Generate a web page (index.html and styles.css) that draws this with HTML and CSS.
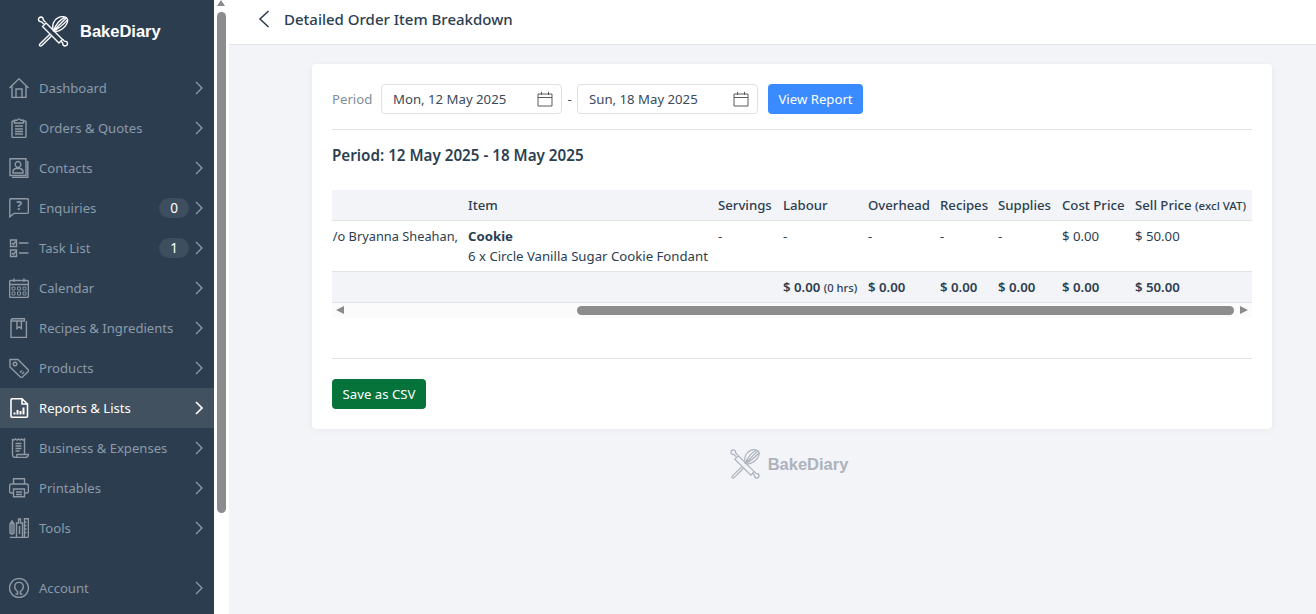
FILE: index.html
```html
<!DOCTYPE html>
<html lang="en">

<head>
    <meta charset="UTF-8">
    <meta name="viewport" content="width=device-width, initial-scale=1.0">
    <title>Detailed Order Item Breakdown</title>
    <link rel="stylesheet" href="styles.css">
</head>

<body>
    <svg class="defs" width="0" height="0">
        <symbol id="logo" viewBox="0 0 32 32">
            <!-- rolling pin -->
            <path d="M8.84 7.16 L25.84 24.16 L22.16 27.84 L5.16 10.84 Z" />
            <path d="M6.4 8.2 L4.2 6 Q1 6 1 3.6 Q1.2 1.2 3.6 1 Q6 1 6 4.2 L8.2 6.4" />
            <path d="M25.6 23.8 L27.8 26 Q31 26 31 28.4 Q30.8 30.8 28.4 31 Q26 31 26 27.8 L23.8 25.6" />
            <!-- whisk -->
            <path d="M12.5 19 L3 28.4 Q1.4 30 2.4 30.8 Q3.4 31.6 5 30 L14.2 20.8" />
            <path d="M16.4 15.4 C14.5 9 17 4 21 2 C25 -.2 30 .5 31 3.5 C32 8 27 13 23 14.8 C21 15.8 18.5 16 16.4 15.4 Z" />
            <path d="M16.6 15.2 C18.5 9.5 23 4 28 1.4 M16.6 15.2 C21 13.5 27 8.5 31 4 M16.6 15.2 L29.5 2" />
        </symbol>
        <symbol id="chev" viewBox="0 0 8 14">
            <path d="M1 1 L7 7 L1 13" />
        </symbol>
        <symbol id="cal" viewBox="0 0 16 16">
            <path d="M1 3 H15 V15 H1 Z M1 6.5 H15 M4.5 .8 V4 M11.5 .8 V4" />
        </symbol>
    </svg>

    <div class="app">
        <aside class="sidebar">
            <div class="brand">
                <svg class="brand-logo"><use href="#logo" /></svg>
                <span class="brand-name">BakeDiary</span>
            </div>
            <nav class="menu">
                <a class="menu-item">
                    <svg class="menu-icon" viewBox="0 0 20 20"><path d="M.5 10 L10 .8 L19.5 10 M3 8 V19.4 H17 V8 M7 19.4 V11 H13 V19.4" /></svg>
                    <span class="menu-label">Dashboard</span>
                    <svg class="chev"><use href="#chev" /></svg>
                </a>
                <a class="menu-item">
                    <svg class="menu-icon" viewBox="0 0 20 20"><path d="M5.5 3 H4 Q3 3 3 4 V18.4 Q3 19.4 4 19.4 H16 Q17 19.4 17 18.4 V4 Q17 3 16 3 H14.5 M5.5 2.2 H8 Q10 -.4 12 2.2 H14.5 V5 H5.5 Z M6 8 H14 M6 11 H14 M6 13.5 H14 M6 16 H14" /></svg>
                    <span class="menu-label">Orders &amp; Quotes</span>
                    <svg class="chev"><use href="#chev" /></svg>
                </a>
                <a class="menu-item">
                    <svg class="menu-icon" viewBox="0 0 20 20"><path d="M1 .8 H17 V17.5 H1 Z M18.8 3 V19.4 H3 M9 3.5 A2.8 3 0 1 1 8.99 3.5 M4 15 V13.5 Q4 11 7 10.5 H11 Q14 11 14 13.5 V15 Z" /></svg>
                    <span class="menu-label">Contacts</span>
                    <svg class="chev"><use href="#chev" /></svg>
                </a>
                <a class="menu-item">
                    <svg class="menu-icon" viewBox="0 0 20 20"><path d="M2 .8 H18 Q19.4 .8 19.4 2 V14 Q19.4 15.4 18 15.4 H5 L.8 18.8 V2 Q.8 .8 2 .8 Z" /><text class="icon-q" x="10" y="12.4">?</text></svg>
                    <span class="menu-label">Enquiries</span>
                    <span class="badge">0</span>
                    <svg class="chev"><use href="#chev" /></svg>
                </a>
                <a class="menu-item">
                    <svg class="menu-icon" viewBox="0 0 20 20"><path d="M1.5 2 H7.5 V8.5 H1.5 Z M1.5 12 H7.5 V18.5 H1.5 Z M3 5 L4.4 6.5 L6.6 3.5 M3 15 L4.4 16.5 L6.6 13.5 M10 5 H19.5 M10 15 H19.5" /></svg>
                    <span class="menu-label">Task List</span>
                    <span class="badge">1</span>
                    <svg class="chev"><use href="#chev" /></svg>
                </a>
                <a class="menu-item">
                    <svg class="menu-icon" viewBox="0 0 20 20"><path d="M2 2.5 H18 Q19.4 2.5 19.4 4 V18 Q19.4 19.4 18 19.4 H2 Q.6 19.4 .6 18 V4 Q.6 2.5 2 2.5 Z M.6 6.5 H19.4 M5 .6 V4 M15 .6 V4" /><path class="icon-fill" d="M3 9 H6 V12 H3 Z M8.5 9 H11.5 V12 H8.5 Z M14 9 H17 V12 H14 Z M3 14 H6 V17 H3 Z M8.5 14 H11.5 V17 H8.5 Z M14 14 H17 V17 H14 Z" /></svg>
                    <span class="menu-label">Calendar</span>
                    <svg class="chev"><use href="#chev" /></svg>
                </a>
                <a class="menu-item">
                    <svg class="menu-icon" viewBox="0 0 20 20"><path d="M2 3 V19.4 H17.4 V3 M2 3 Q2 .8 4 .8 H15.4 V3 H2 M8 3 V10.5 L10.2 8.8 L12.4 10.5 V3" /></svg>
                    <span class="menu-label">Recipes &amp; Ingredients</span>
                    <svg class="chev"><use href="#chev" /></svg>
                </a>
                <a class="menu-item">
                    <svg class="menu-icon" viewBox="0 0 20 20"><path d="M1 1.5 H9 L19.4 12 Q19.8 12.6 19.4 13.2 L13 19.4 Q12.4 19.8 11.8 19.4 L1 9 Z M6 4.2 A1.8 1.8 0 1 1 5.99 4.2 M11 14.5 L13 12.5 M13 16 L15 14" /></svg>
                    <span class="menu-label">Products</span>
                    <svg class="chev"><use href="#chev" /></svg>
                </a>
                <a class="menu-item menu-item-active">
                    <svg class="menu-icon" viewBox="0 0 20 20"><path d="M3 .8 H13 L18.5 6 V18.2 Q18.5 19.2 17.5 19.2 H3 Q2 19.2 2 18.2 V1.8 Q2 .8 3 .8 Z M13 .8 V6 H18.5" /><path class="icon-bars" d="M5.5 16.5 V14.5 M8.5 16.5 V12 M11.5 16.5 V13 M14.5 16.5 V9.5" /></svg>
                    <span class="menu-label">Reports &amp; Lists</span>
                    <svg class="chev"><use href="#chev" /></svg>
                </a>
                <a class="menu-item">
                    <svg class="menu-icon" viewBox="0 0 20 20"><path d="M3.5 1 L5 2.2 L6.5 1 L8 2.2 L9.5 1 L11 2.2 L12.5 1 L14 2.2 L15.5 1 V16 M3.5 1 V16.5 Q3.5 19.4 6 19.4 H17 Q19.4 19 19.4 16.5 H8 Q8 19.4 6 19.4 M6.5 5.5 H12.5 M6.5 8 H12.5 M6.5 10.5 H12.5 M6.5 13 H10.5" /></svg>
                    <span class="menu-label">Business &amp; Expenses</span>
                    <svg class="chev"><use href="#chev" /></svg>
                </a>
                <a class="menu-item">
                    <svg class="menu-icon" viewBox="0 0 20 20"><path d="M4.5 6 V.8 H15.5 V6 M4.5 15 H2 Q.6 15 .6 13.5 V8 Q.6 6 2.5 6 H17.5 Q19.4 6 19.4 8 V13.5 Q19.4 15 18 15 H15.5 M4.5 11 H15.5 V18.8 H4.5 Z M7 14 H13 M7 16.5 H13" /></svg>
                    <span class="menu-label">Printables</span>
                    <svg class="chev"><use href="#chev" /></svg>
                </a>
                <a class="menu-item">
                    <svg class="menu-icon" viewBox="0 0 20 20"><path d="M.8 19.4 H19.4 M1 15 V6 L3 3 L5 6 V15 Q3 17 1 15 Z M3 3 V15 M7.5 19 V5 H9.5 V1 H11.5 V5 H13.5 V19 M10.5 8 V16 M15.5 19 V.8 H19.4 V19 M15.5 4 H17.5 M15.5 7.5 H17.5 M15.5 11 H17.5 M15.5 14.5 H17.5" /></svg>
                    <span class="menu-label">Tools</span>
                    <svg class="chev"><use href="#chev" /></svg>
                </a>
            </nav>
            <a class="menu-item menu-account">
                <svg class="menu-icon" viewBox="0 0 20 20"><path d="M10 .6 A9.4 9.4 0 1 1 9.99 .6 M6.5 16 H8.6 V13.5 Q5.5 11.5 5.7 8.5 Q6 4.4 10 4.4 Q14 4.4 14.3 8.5 Q14.5 11.5 11.4 13.5 V16 H13.5" /></svg>
                <span class="menu-label">Account</span>
                <svg class="chev"><use href="#chev" /></svg>
            </a>
        </aside>

        <div class="side-scroll">
            <span class="side-arrow"></span>
            <span class="side-thumb"></span>
        </div>

        <div class="content">
            <header class="topbar">
                <svg class="back" viewBox="0 0 12 18"><path d="M10.5 1 L2 9 L10.5 17" /></svg>
                <h1 class="page-title">Detailed Order Item Breakdown</h1>
            </header>

            <main class="page">
                <section class="card">
                    <form class="period-form">
                        <label class="period-label">Period</label>
                        <div class="date-input">
                            <span>Mon, 12 May 2025</span>
                            <svg class="cal-icon"><use href="#cal" /></svg>
                        </div>
                        <span class="date-sep">-</span>
                        <div class="date-input">
                            <span>Sun, 18 May 2025</span>
                            <svg class="cal-icon"><use href="#cal" /></svg>
                        </div>
                        <button class="btn btn-blue" type="button">View Report</button>
                    </form>

                    <h2 class="period-title">Period: 12 May 2025 - 18 May 2025</h2>

                    <div class="table-wrap">
                        <table class="report">
                            <colgroup>
                                <col class="col-order">
                                <col class="col-item">
                                <col class="col-servings">
                                <col class="col-labour">
                                <col class="col-overhead">
                                <col class="col-recipes">
                                <col class="col-supplies">
                                <col class="col-cost">
                                <col class="col-sell">
                            </colgroup>
                            <thead>
                                <tr>
                                    <th></th>
                                    <th>Item</th>
                                    <th>Servings</th>
                                    <th>Labour</th>
                                    <th>Overhead</th>
                                    <th>Recipes</th>
                                    <th>Supplies</th>
                                    <th>Cost Price</th>
                                    <th>Sell Price <small class="note">(excl VAT)</small></th>
                                </tr>
                            </thead>
                            <tbody>
                                <tr>
                                    <td class="order-cell">/o Bryanna Sheahan,</td>
                                    <td><strong>Cookie</strong><br>6 x Circle Vanilla Sugar Cookie Fondant</td>
                                    <td>-</td>
                                    <td>-</td>
                                    <td>-</td>
                                    <td>-</td>
                                    <td>-</td>
                                    <td>$ 0.00</td>
                                    <td>$ 50.00</td>
                                </tr>
                            </tbody>
                            <tfoot>
                                <tr>
                                    <td></td>
                                    <td></td>
                                    <td></td>
                                    <td>$ 0.00 <small class="note note-hrs">(0 hrs)</small></td>
                                    <td>$ 0.00</td>
                                    <td>$ 0.00</td>
                                    <td>$ 0.00</td>
                                    <td>$ 0.00</td>
                                    <td>$ 50.00</td>
                                </tr>
                            </tfoot>
                        </table>
                        <div class="hscroll">
                            <span class="arrow-left"></span>
                            <span class="hscroll-thumb"></span>
                            <span class="arrow-right"></span>
                        </div>
                    </div>

                    <div class="card-foot">
                        <button class="btn btn-green" type="button">Save as CSV</button>
                    </div>
                </section>

                <div class="foot-brand">
                    <svg class="foot-logo"><use href="#logo" /></svg>
                    <span class="foot-name">BakeDiary</span>
                </div>
            </main>
        </div>
    </div>
</body>

</html>
```

FILE: styles.css
```css
* {
    box-sizing: border-box;
}

html,
body {
    height: 100%;
}

body {
    margin: 0;
    overflow: hidden;
    font-family: "Noto Sans", Arial, sans-serif;
    font-size: 13.2px;
    color: #2c3e50;
    background: #fff;
}

.defs {
    position: absolute;
}

.app {
    display: flex;
    height: 614px;
}

/* sidebar */
.sidebar {
    width: 214px;
    flex: none;
    display: flex;
    flex-direction: column;
    background: #2d3d50;
}

.brand {
    height: 68px;
    flex: none;
    display: flex;
    align-items: flex-start;
    padding: 16px 0 0 37px;
}

.brand-logo {
    width: 32px;
    height: 31px;
    fill: none;
    stroke: #fff;
    stroke-width: 1.4;
}

.brand-name {
    margin: 6px 0 0 11px;
    font-family: "Liberation Sans", Arial, sans-serif;
    font-size: 16.5px;
    font-weight: 700;
    color: #fff;
}

.menu {
    display: flex;
    flex-direction: column;
}

.menu-item {
    height: 40px;
    flex: none;
    display: flex;
    align-items: center;
    padding: 0 11px 0 9px;
    font-size: 13.1px;
    color: #8a9baa;
}

.menu-item-active {
    background: #425160;
    color: #fff;
}

.menu-account {
    margin-top: 20px;
}

.menu-icon {
    width: 20px;
    height: 20px;
    flex: none;
    fill: none;
    stroke: #8f9aa4;
    stroke-width: 1.4;
}

.menu-item-active .menu-icon {
    stroke: #fff;
    stroke-width: 1.6;
}

.icon-fill {
    stroke-width: .9;
}

.icon-bars {
    stroke-width: 2;
}

.icon-q {
    fill: #8f9aa4;
    stroke: none;
    font-size: 12px;
    font-weight: 700;
    text-anchor: middle;
}

.menu-label {
    flex: 1;
    margin-left: 10px;
    white-space: nowrap;
}

.badge {
    width: 30px;
    height: 20px;
    margin-right: 6px;
    border-radius: 10px;
    background: #3d4e5f;
    color: #fff;
    font-size: 13.5px;
    line-height: 20px;
    text-align: center;
}

.chev {
    width: 8px;
    height: 14px;
    flex: none;
    fill: none;
    stroke: #8a9baa;
    stroke-width: 1.3;
}

.menu-item-active .chev {
    stroke: #fff;
    stroke-width: 1.6;
}

.side-scroll {
    width: 15px;
    flex: none;
    display: flex;
    flex-direction: column;
    align-items: flex-start;
    padding-left: 3px;
    background: #fff;
}

.side-arrow {
    width: 0;
    height: 0;
    margin: 0 0 6px 0;
    border-left: 4.5px solid transparent;
    border-right: 4.5px solid transparent;
    border-bottom: 6px solid #8a8a8a;
}

.side-thumb {
    width: 9px;
    height: 501px;
    border-radius: 5px;
    background: #8c8c8c;
}

/* main area */
.content {
    flex: 1;
    min-width: 0;
    display: flex;
    flex-direction: column;
    background: #f3f4f8;
}

.topbar {
    height: 45px;
    flex: none;
    display: flex;
    align-items: center;
    padding: 0 0 6px 29px;
    background: #fff;
    border-bottom: 1px solid #e2e3e6;
}

.back {
    width: 12px;
    height: 18px;
    fill: none;
    stroke: #2c3e50;
    stroke-width: 1.6;
}

.page-title {
    margin: 0 0 0 14px;
    font-size: 15px;
    font-weight: 500;
    color: #2c3e50;
}

.page {
    padding: 19px 44px 0 83px;
}

.card {
    height: 365px;
    padding: 20px;
    background: #fff;
    border-radius: 4px;
    box-shadow: 0 1px 6px rgba(0, 0, 0, .05);
}

.period-form {
    display: flex;
    align-items: center;
    height: 46px;
    padding-bottom: 15px;
    border-bottom: 1px solid #e2e3e6;
}

.period-label {
    width: 49px;
    color: #7f8e9c;
}

.date-input {
    width: 181px;
    height: 30px;
    display: flex;
    align-items: center;
    justify-content: space-between;
    padding: 0 8px 0 11px;
    border: 1px solid #dfe1e5;
    border-radius: 4px;
    color: #3a4a5a;
}

.date-sep {
    width: 15px;
    text-align: center;
    color: #3a4a5a;
}

.cal-icon {
    width: 16px;
    height: 16px;
    fill: none;
    stroke: #5a5a5a;
    stroke-width: 1;
}

.btn {
    height: 30px;
    padding: 0 10px;
    border: none;
    border-radius: 4px;
    color: #fff;
    font-family: inherit;
    font-size: 13.2px;
}

.btn-blue {
    width: 95px;
    margin-left: 10px;
    background: #3a8bff;
}

.btn-green {
    width: 94px;
    background: #05733a;
}

.period-title {
    margin: 0;
    height: 60px;
    padding-top: 15px;
    font-size: 15.2px;
    font-weight: 600;
    color: #2c3e50;
}

.table-wrap {
    height: 168px;
}

.report {
    width: 920px;
    table-layout: fixed;
    border-collapse: collapse;
}

.col-order {
    width: 131px;
}

.col-item {
    width: 250px;
}

.col-servings {
    width: 65px;
}

.col-labour {
    width: 85px;
}

.col-overhead {
    width: 72px;
}

.col-recipes {
    width: 58px;
}

.col-supplies {
    width: 64px;
}

.col-cost {
    width: 73px;
}

.col-sell {
    width: 122px;
}

.report th,
.report td {
    padding: 0 5px;
    text-align: left;
    white-space: nowrap;
    vertical-align: middle;
}

.report th {
    height: 30px;
    font-weight: 500;
    background: #f3f4f8;
    border-bottom: 1px solid #e2e3e6;
}

.report tbody td {
    height: 51px;
    padding-top: 5px;
    padding-bottom: 5px;
    line-height: 20px;
    vertical-align: top;
    border-bottom: 1px solid #e2e3e6;
}

.report tfoot td {
    height: 31px;
    font-weight: 600;
    background: #f3f4f8;
    border-bottom: 1px solid #e2e3e6;
}

.report tbody .order-cell {
    padding-left: 0;
    padding-right: 5px;
    font-size: 12.8px;
    text-align: right;
}

.note {
    font-size: 11.5px;
    font-weight: 500;
}

.note-hrs {
    font-size: 11.2px;
}

.hscroll {
    height: 15px;
    display: flex;
    align-items: center;
    background: #fbfbfb;
}

.arrow-left {
    width: 0;
    height: 0;
    margin-left: 4px;
    border-top: 4.5px solid transparent;
    border-bottom: 4.5px solid transparent;
    border-right: 8px solid #8a8a8a;
}

.hscroll-thumb {
    width: 657px;
    height: 9px;
    margin-left: 233px;
    border-radius: 5px;
    background: #8c8c8c;
}

.arrow-right {
    width: 0;
    height: 0;
    margin-left: 6px;
    border-top: 4.5px solid transparent;
    border-bottom: 4.5px solid transparent;
    border-left: 8px solid #8a8a8a;
}

.card-foot {
    padding-top: 20px;
    border-top: 1px solid #e2e3e6;
}

.foot-brand {
    display: flex;
    align-items: center;
    justify-content: center;
    margin-top: 20px;
    padding-right: 6px;
}

.foot-logo {
    width: 30px;
    height: 30px;
    fill: none;
    stroke: #adb3bd;
    stroke-width: 1.3;
}

.foot-name {
    margin-left: 8px;
    font-family: "Liberation Sans", Arial, sans-serif;
    font-size: 16.5px;
    font-weight: 700;
    color: #adb3bd;
}
```
